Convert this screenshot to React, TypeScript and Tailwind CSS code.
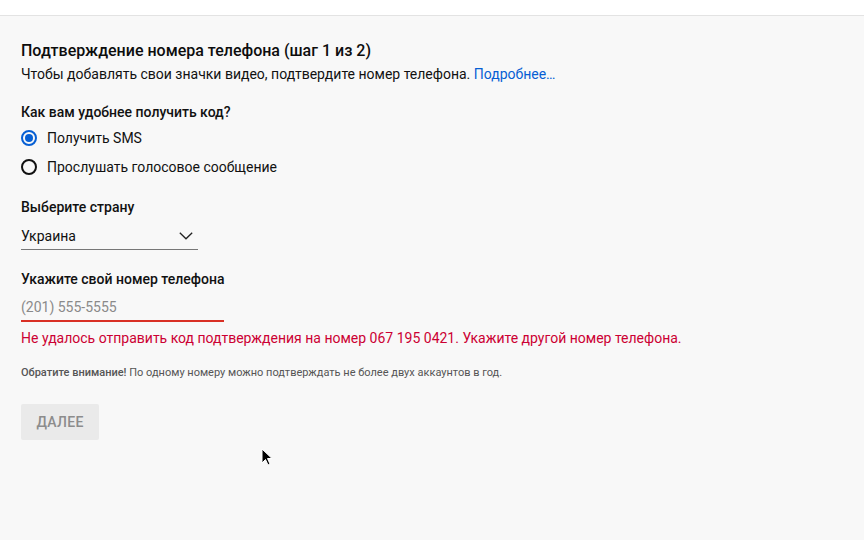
export default function App() {
  return (
    <div className="min-h-[540px] w-[864px] bg-[#f8f8f8] font-['Roboto',sans-serif] text-[#111] relative">
      <div className="h-[16px] bg-white border-b border-[#e3e3e3]" />
      <div className="px-[21px] pt-[23px]">
        <h2 className="text-[16px] leading-[24px] font-medium text-[#0d0d0d]">
          Подтверждение номера телефона (шаг 1 из 2)
        </h2>
        <p className="text-[14px] leading-[20px] mt-[1px]">
          Чтобы добавлять свои значки видео, подтвердите номер телефона.{" "}
          <a className="text-[#065fd4]">Подробнее…</a>
        </p>

        <div className="mt-[18px] text-[14px] leading-[20px] font-medium">Как вам удобнее получить код?</div>
        <div className="mt-[6px] flex items-center gap-[10px] h-[20px] text-[14px]">
          <span className="w-[16px] h-[16px] rounded-full border-2 border-[#065fd4] flex items-center justify-center">
            <span className="w-[8px] h-[8px] rounded-full bg-[#065fd4]" />
          </span>
          <span>Получить SMS</span>
        </div>
        <div className="mt-[9px] flex items-center gap-[10px] h-[20px] text-[14px]">
          <span className="w-[16px] h-[16px] rounded-full border-2 border-[#111]" />
          <span>Прослушать голосовое сообщение</span>
        </div>

        <div className="mt-[20px] text-[14px] leading-[20px] font-medium">Выберите страну</div>
        <div className="mt-[6px] w-[177px] h-[27px] flex items-center justify-between border-b border-[#777] text-[14px]">
          <span>Украина</span>
          <svg className="mr-[5px]" width="14" height="8" viewBox="0 0 14 8">
            <path d="M0.8 0.8 L7 6.8 L13.2 0.8" fill="none" stroke="#222" strokeWidth="1.3" />
          </svg>
        </div>

        <div className="mt-[19px] text-[14px] leading-[20px] font-medium">Укажите свой номер телефона</div>
        <div className="mt-[6px] w-[203px] h-[27px] flex items-center border-b-2 border-[#d93025] text-[14px] text-[#8a8a8a]">
          (201) 555-5555
        </div>
        <p className="mt-[6px] text-[14px] leading-[20px] text-[#cc0033]">
          Не удалось отправить код подтверждения на номер 067 195 0421. Укажите другой номер телефона.
        </p>
        <p className="mt-[17px] text-[11px] leading-[16px] text-[#555]">
          <span className="font-medium">Обратите внимание!</span> По одному номеру можно подтверждать не более двух аккаунтов в год.
        </p>
        <button className="mt-[23px] w-[78px] h-[36px] rounded-[2px] bg-[#eaeaea] text-[14px] font-medium text-[#8c8c8c] tracking-[0.3px]">
          ДАЛЕЕ
        </button>
      </div>
      <svg className="absolute left-[261px] top-[448px]" width="12" height="19" viewBox="0 0 12 19">
        <path d="M1 1 L1 15 L4.5 11.5 L7 17 L9 16 L6.5 10.5 L11 10.5 Z" fill="#000" stroke="#fff" strokeWidth="1" />
      </svg>
    </div>
  );
}
